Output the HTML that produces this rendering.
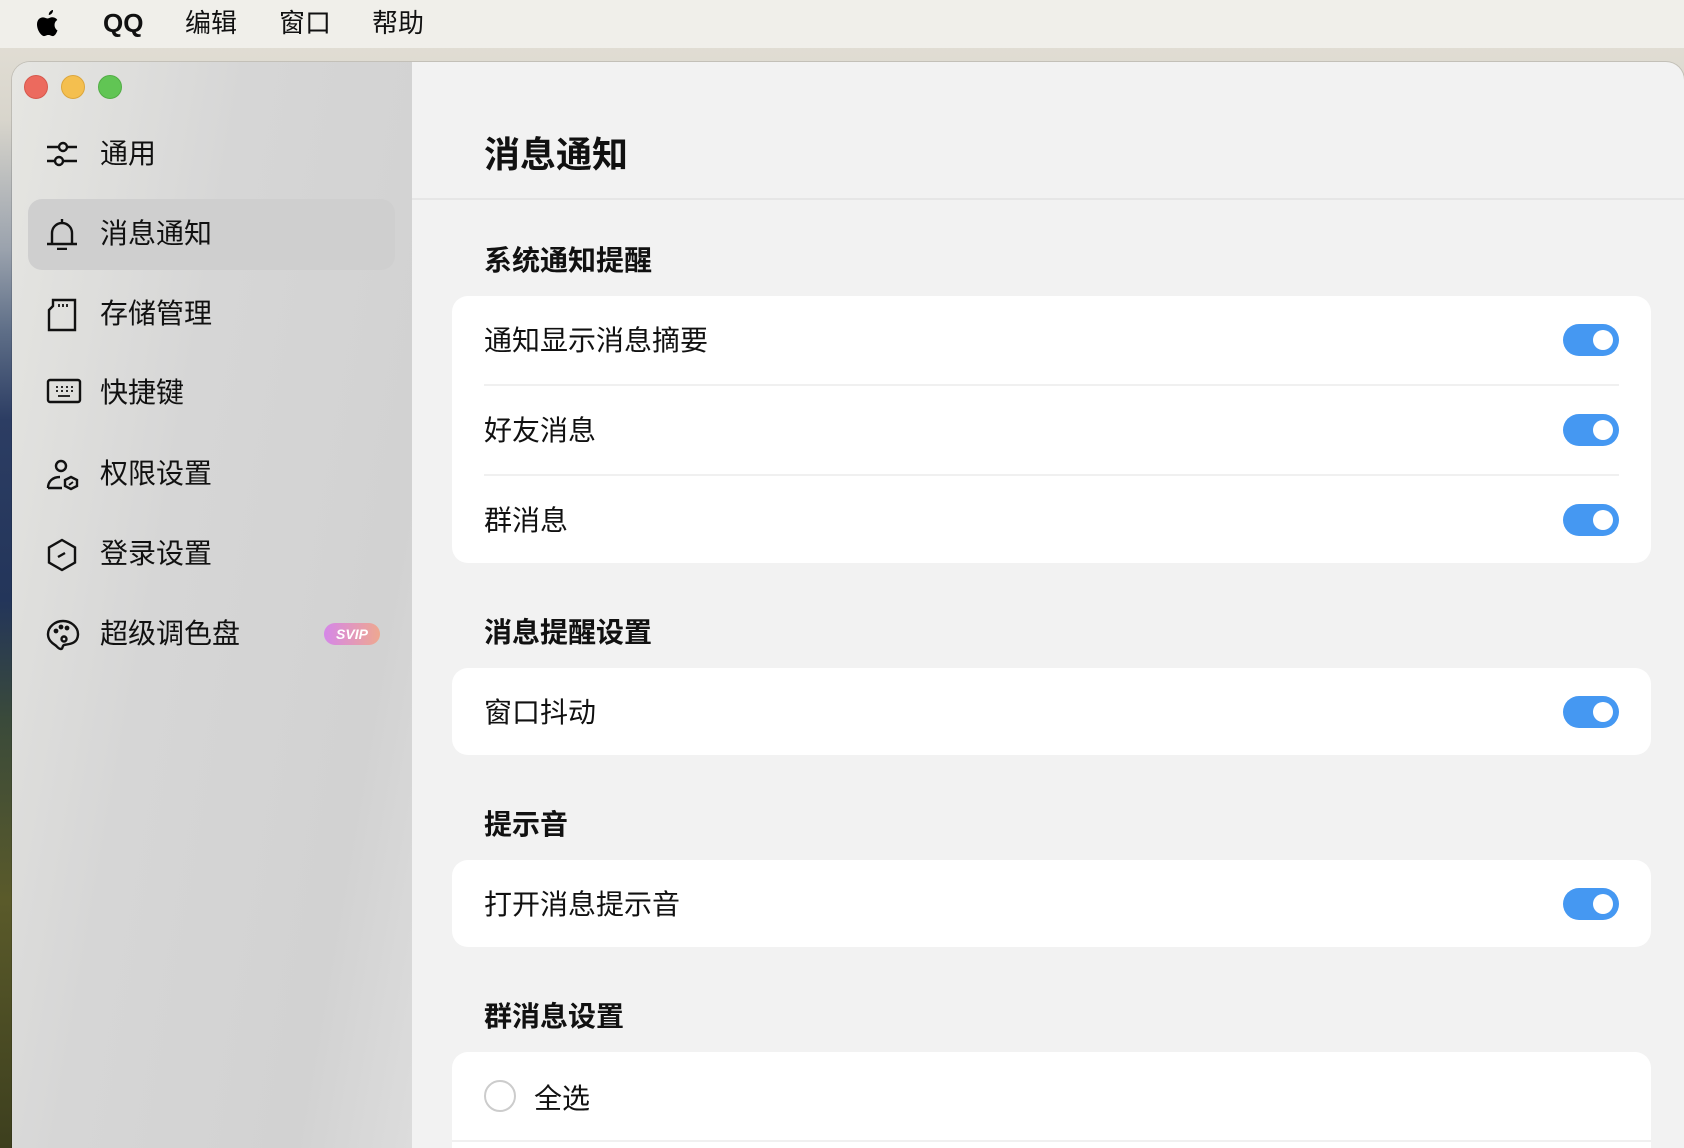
<!DOCTYPE html>
<html><head><meta charset="utf-8"><style>
*{margin:0;padding:0;box-sizing:border-box}
html,body{width:1684px;height:1148px;overflow:hidden}
body{position:relative;font-family:"Liberation Sans","Noto Sans CJK SC",sans-serif;color:#111;
background:linear-gradient(180deg,#e6e2d8 0px,#d8d5cc 120px,#9aa2ad 250px,#5f6f88 330px,#2c3d63 420px,#23355a 600px,#3a4a3a 720px,#5a5a2a 900px,#3d3f1e 1148px)}
.menubar{position:absolute;left:0;top:0;width:1684px;height:48px;background:#f0efea;font-size:26px;}
.menubar span{position:absolute;top:6px;line-height:34px}
.win{position:absolute;left:12px;top:62px;width:1672px;height:1086px;border-radius:18px 18px 0 0;overflow:hidden;background:#f2f2f2;box-shadow:0 0 0 1px rgba(0,0,0,.12)}
.side{position:absolute;left:0;top:0;width:400px;height:100%;background:linear-gradient(100deg,#e6e6e2 0%,#d6d6d6 40%,#d2d2d2 80%,#dcdcdc 100%)}
.tl{position:absolute;top:13px;width:24px;height:24px;border-radius:50%}
.item{position:absolute;left:0;width:400px;height:60px;font-size:28px;line-height:60px}
.item .t{position:absolute;left:88px}
.item svg{position:absolute;left:34px;top:14px}
.hl{position:absolute;left:16px;top:137px;width:367px;height:71px;border-radius:14px;background:#cfcfcf}
.main{position:absolute;left:400px;top:0;right:0;height:100%}
.hdrline{position:absolute;left:0;top:136px;width:1300px;height:2px;background:#e6e6e6}
.title{position:absolute;left:72px;top:64px;font-size:36px;font-weight:bold}
.sec{position:absolute;left:72px;font-size:28px;font-weight:bold}
.card{position:absolute;left:40px;width:1199px;background:#fff;border-radius:16px}
.row{position:absolute;left:32px;font-size:28px}
.sep{position:absolute;left:32px;right:32px;height:2px;background:#f0f0f0}
.tog{position:absolute;right:32px;width:56px;height:32px;border-radius:16px;background:#4598f2}
.tog::after{content:"";position:absolute;right:6px;top:6px;width:20px;height:20px;border-radius:50%;background:#fff}
</style></head><body>
<div class="menubar">
<span style="left:34px;top:8px"><svg width="28" height="32" viewBox="0 0 28 32"><path d="M19 2c.3 2.3-1.8 5-4.2 5-.3-2.2 1.9-4.8 4.2-5zM23.5 22.5c-1 2.4-2.6 5.6-4.7 5.6-1.8 0-2.3-1.1-4.4-1.1s-2.7 1.1-4.4 1.1C7.6 28.1 3 22.7 3 16.4c0-4.6 3-7 5.8-7 1.9 0 3.1 1.1 4.7 1.1 1.5 0 2.4-1.2 4.8-1.2 1.2 0 3.6.4 5 2.7-4 2.4-3.3 8.3.2 10.5z" fill="#000"/></svg></span>
<span style="left:103px;font-weight:bold">QQ</span>
<span style="left:185px">编辑</span>
<span style="left:279px">窗口</span>
<span style="left:372px">帮助</span>
</div>
<div class="win">
<div class="side">
<div class="tl" style="left:12px;background:#ec6a5e;border:1px solid #d6584d"></div>
<div class="tl" style="left:49px;background:#f4bf4f;border:1px solid #dca63c"></div>
<div class="tl" style="left:86px;background:#61c554;border:1px solid #52ad45"></div>
<div class="hl"></div>
<div class="item" style="top:62px"><svg width="32" height="32" viewBox="0 0 32 32" fill="none" stroke="#111" stroke-width="2.4"><path d="M1 9h12M21 9h10M1 23h8M17 23h14"/><circle cx="17" cy="9" r="4"/><circle cx="13" cy="23" r="4"/></svg><span class="t">通用</span></div>
<div class="item" style="top:142px"><svg width="32" height="32" viewBox="0 0 32 32" fill="none" stroke="#111" stroke-width="2.4"><path d="M16 1v3M6 26V15a10 10 0 0 1 20 0v11M1 26h30M11 31h10"/></svg><span class="t">消息通知</span></div>
<div class="item" style="top:222px"><svg width="32" height="34" viewBox="0 0 32 34" fill="none" stroke="#111" stroke-width="2.4"><path d="M7 2h22v30H3V12l4-4z"/><path d="M13 6v3M17 6v3M21 6v3" stroke-width="1.8"/></svg><span class="t">存储管理</span></div>
<div class="item" style="top:301px"><svg width="36" height="28" viewBox="0 0 36 28" fill="none" stroke="#111" stroke-width="2.4"><rect x="2" y="3" width="32" height="22" rx="2"/><path d="M10 10h2M15 10h2M20 10h2M25 10h2M10 14h2M15 14h2M20 14h2M25 14h2M12 19h12" stroke-width="1.8"/></svg><span class="t">快捷键</span></div>
<div class="item" style="top:382px"><svg width="34" height="34" viewBox="0 0 34 34" fill="none" stroke="#111" stroke-width="2.4"><circle cx="15" cy="8" r="5"/><path d="M2 30c0-7 5-11 12-11M2 30h14"/><path d="M25 19l6 3v6l-6 3-6-3v-6z"/><path d="M23 27l4-3" stroke-width="1.8"/></svg><span class="t">权限设置</span></div>
<div class="item" style="top:462px"><svg width="32" height="34" viewBox="0 0 32 34" fill="none" stroke="#111" stroke-width="2.4"><path d="M16 2l13 7.5v15L16 32 3 24.5v-15z"/><path d="M12 19l7-4"/></svg><span class="t">登录设置</span></div>
<div class="item" style="top:542px"><svg width="34" height="34" viewBox="0 0 34 34" fill="none" stroke="#111" stroke-width="2.4"><path d="M17 3C9 3 2 9 2 16c0 6 4 9 7 11 2 1 3 4 6 4 2 0 1-3 3-4 3-1 14 0 14-11 0-7-7-13-15-13z"/><circle cx="10" cy="13" r="1.2" fill="#111"/><circle cx="15" cy="9" r="1.2" fill="#111"/><circle cx="21" cy="10" r="1.2" fill="#111"/><circle cx="18" cy="21" r="2.5"/></svg><span class="t">超级调色盘</span>
<span style="position:absolute;left:312px;top:19px;width:56px;height:22px;border-radius:11px;background:linear-gradient(90deg,#d587e8,#eea890);color:#fff;font-size:14px;font-weight:bold;font-style:italic;line-height:22px;text-align:center">SVIP</span></div>
</div>
<div class="main">
<div class="title">消息通知</div>
<div class="hdrline"></div>
<div class="sec" style="top:177px">系统通知提醒</div>
<div class="card" style="top:234px;height:267px">
<div class="row" style="top:23px">通知显示消息摘要</div><div class="tog" style="top:28px"></div>
<div class="sep" style="top:88px"></div>
<div class="row" style="top:113px">好友消息</div><div class="tog" style="top:118px"></div>
<div class="sep" style="top:178px"></div>
<div class="row" style="top:203px">群消息</div><div class="tog" style="top:208px"></div>
</div>
<div class="sec" style="top:549px">消息提醒设置</div>
<div class="card" style="top:606px;height:87px">
<div class="row" style="top:23px">窗口抖动</div><div class="tog" style="top:28px"></div>
</div>
<div class="sec" style="top:741px">提示音</div>
<div class="card" style="top:798px;height:87px">
<div class="row" style="top:23px">打开消息提示音</div><div class="tog" style="top:28px"></div>
</div>
<div class="sec" style="top:933px">群消息设置</div>
<div class="card" style="top:990px;height:96px;border-radius:16px 16px 0 0">
<div style="position:absolute;left:32px;top:28px;width:32px;height:32px;border-radius:50%;border:2px solid #ccc"></div>
<div class="row" style="left:82px;top:25px">全选</div>
<div style="position:absolute;left:0;right:0;top:88px;height:2px;background:#f0f0f0"></div>
</div>
</div>
</div>
</body></html>
